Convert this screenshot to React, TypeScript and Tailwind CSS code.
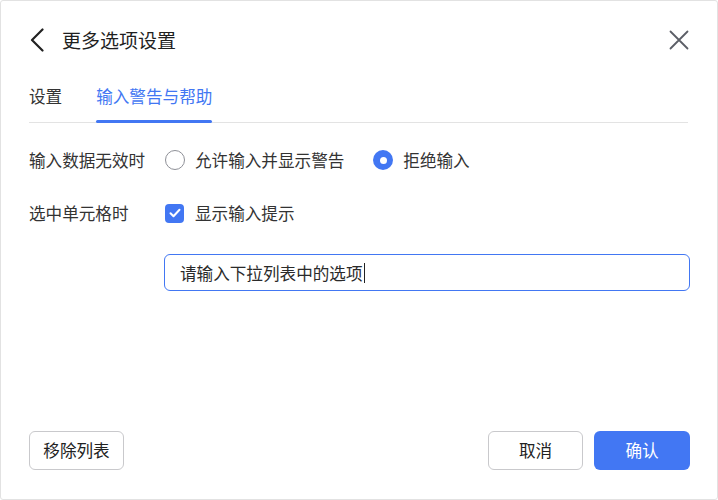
import React, { useState } from 'react';

const Radio: React.FC<{ checked: boolean; label: string; onClick: () => void }> = ({ checked, label, onClick }) => (
  <button type="button" onClick={onClick} className="flex items-center gap-[10px]">
    {checked ? (
      <span className="flex h-5 w-5 items-center justify-center rounded-full bg-[#4277f3]">
        <span className="h-[7px] w-[7px] rounded-full bg-white" />
      </span>
    ) : (
      <span className="h-5 w-5 rounded-full border-[1.5px] border-[#8e9097] bg-white" />
    )}
    <span className="leading-6">{label}</span>
  </button>
);

const App: React.FC = () => {
  const [tab, setTab] = useState(1);
  const [mode, setMode] = useState('reject');
  const [showTip, setShowTip] = useState(true);

  return (
    <div className="h-[500px] w-[718px] bg-white font-['Noto_Sans_CJK_SC',sans-serif] text-[16.6px] text-[#333]">
      <div className="flex h-full w-full flex-col rounded-[3px] border border-[#e2e2e2] pl-[28px] pr-[27px] pb-[29px]">
        {/* header */}
        <div className="mt-[21px] flex h-9 items-center justify-between">
          <div className="flex items-center gap-[18px]">
            <svg width="14" height="24" viewBox="0 0 14 24" fill="none" className="ml-[1px]">
              <path d="M12.5 1.5L2 12l10.5 10.5" stroke="#222" strokeWidth="2.2" strokeLinecap="round" strokeLinejoin="round" />
            </svg>
            <span className="text-[19px] leading-9 text-[#1f1f1f]">更多选项设置</span>
          </div>
          <svg width="20" height="20" viewBox="0 0 20 20" fill="none" className="mr-[1px]">
            <path d="M1.5 1.5l17 17M18.5 1.5l-17 17" stroke="#5b5e66" strokeWidth="1.8" strokeLinecap="round" />
          </svg>
        </div>

        {/* tabs */}
        <div className="mt-[26px] mr-[2px] flex gap-[34px] border-b border-[#e3e3e3]">
          {['设置', '输入警告与帮助'].map((t, i) => (
            <button
              key={t}
              type="button"
              onClick={() => setTab(i)}
              className={`relative pb-[14px] leading-6 ${tab === i ? 'text-[#4277f3]' : 'text-[#333]'}`}
            >
              {t}
              {tab === i && <span className="absolute bottom-[-1px] left-0 h-[3px] w-full rounded-full bg-[#4277f3]" />}
            </button>
          ))}
        </div>

        {/* rows */}
        <div className="mt-[24px] flex h-[26px] items-center">
          <span className="w-[136px] leading-6">输入数据无效时</span>
          <div className="flex items-center gap-[29px]">
            <Radio checked={mode === 'allow'} label="允许输入并显示警告" onClick={() => setMode('allow')} />
            <Radio checked={mode === 'reject'} label="拒绝输入" onClick={() => setMode('reject')} />
          </div>
        </div>

        <div className="mt-[27px] flex h-[26px] items-center">
          <span className="w-[136px] leading-6">选中单元格时</span>
          <button type="button" onClick={() => setShowTip(!showTip)} className="flex items-center gap-[11px]">
            <span
              className={`flex h-[19px] w-[19px] items-center justify-center rounded-[4px] ${
                showTip ? 'bg-[#4277f3]' : 'border-[1.5px] border-[#8e9097] bg-white'
              }`}
            >
              {showTip && (
                <svg width="12" height="10" viewBox="0 0 12 10" fill="none">
                  <path d="M1.5 5.2l3 3 6-6.4" stroke="#fff" strokeWidth="2" strokeLinecap="round" strokeLinejoin="round" />
                </svg>
              )}
            </span>
            <span className="leading-6">显示输入提示</span>
          </button>
        </div>

        <div className="ml-[135px] mt-[28px] flex h-[37px] items-center rounded-[6px] border border-[#4277f3] pl-[15px]">
          <span className="leading-6 text-[#2a2a2a]">请输入下拉列表中的选项</span>
          <span className="ml-[1px] h-[20px] w-[1.5px] bg-[#222]" />
        </div>

        <div className="flex-1" />

        {/* footer */}
        <div className="flex items-center justify-between">
          <button type="button" className="h-[39px] w-[95px] rounded-[6px] border border-[#c9c9cc] bg-white text-[#222]">
            移除列表
          </button>
          <div className="flex gap-[11px]">
            <button type="button" className="h-[39px] w-[95px] rounded-[6px] border border-[#c9c9cc] bg-white text-[#222]">
              取消
            </button>
            <button type="button" className="h-[39px] w-[96px] rounded-[6px] bg-[#4277f3] text-white">
              确认
            </button>
          </div>
        </div>
      </div>
    </div>
  );
};

export default App;
